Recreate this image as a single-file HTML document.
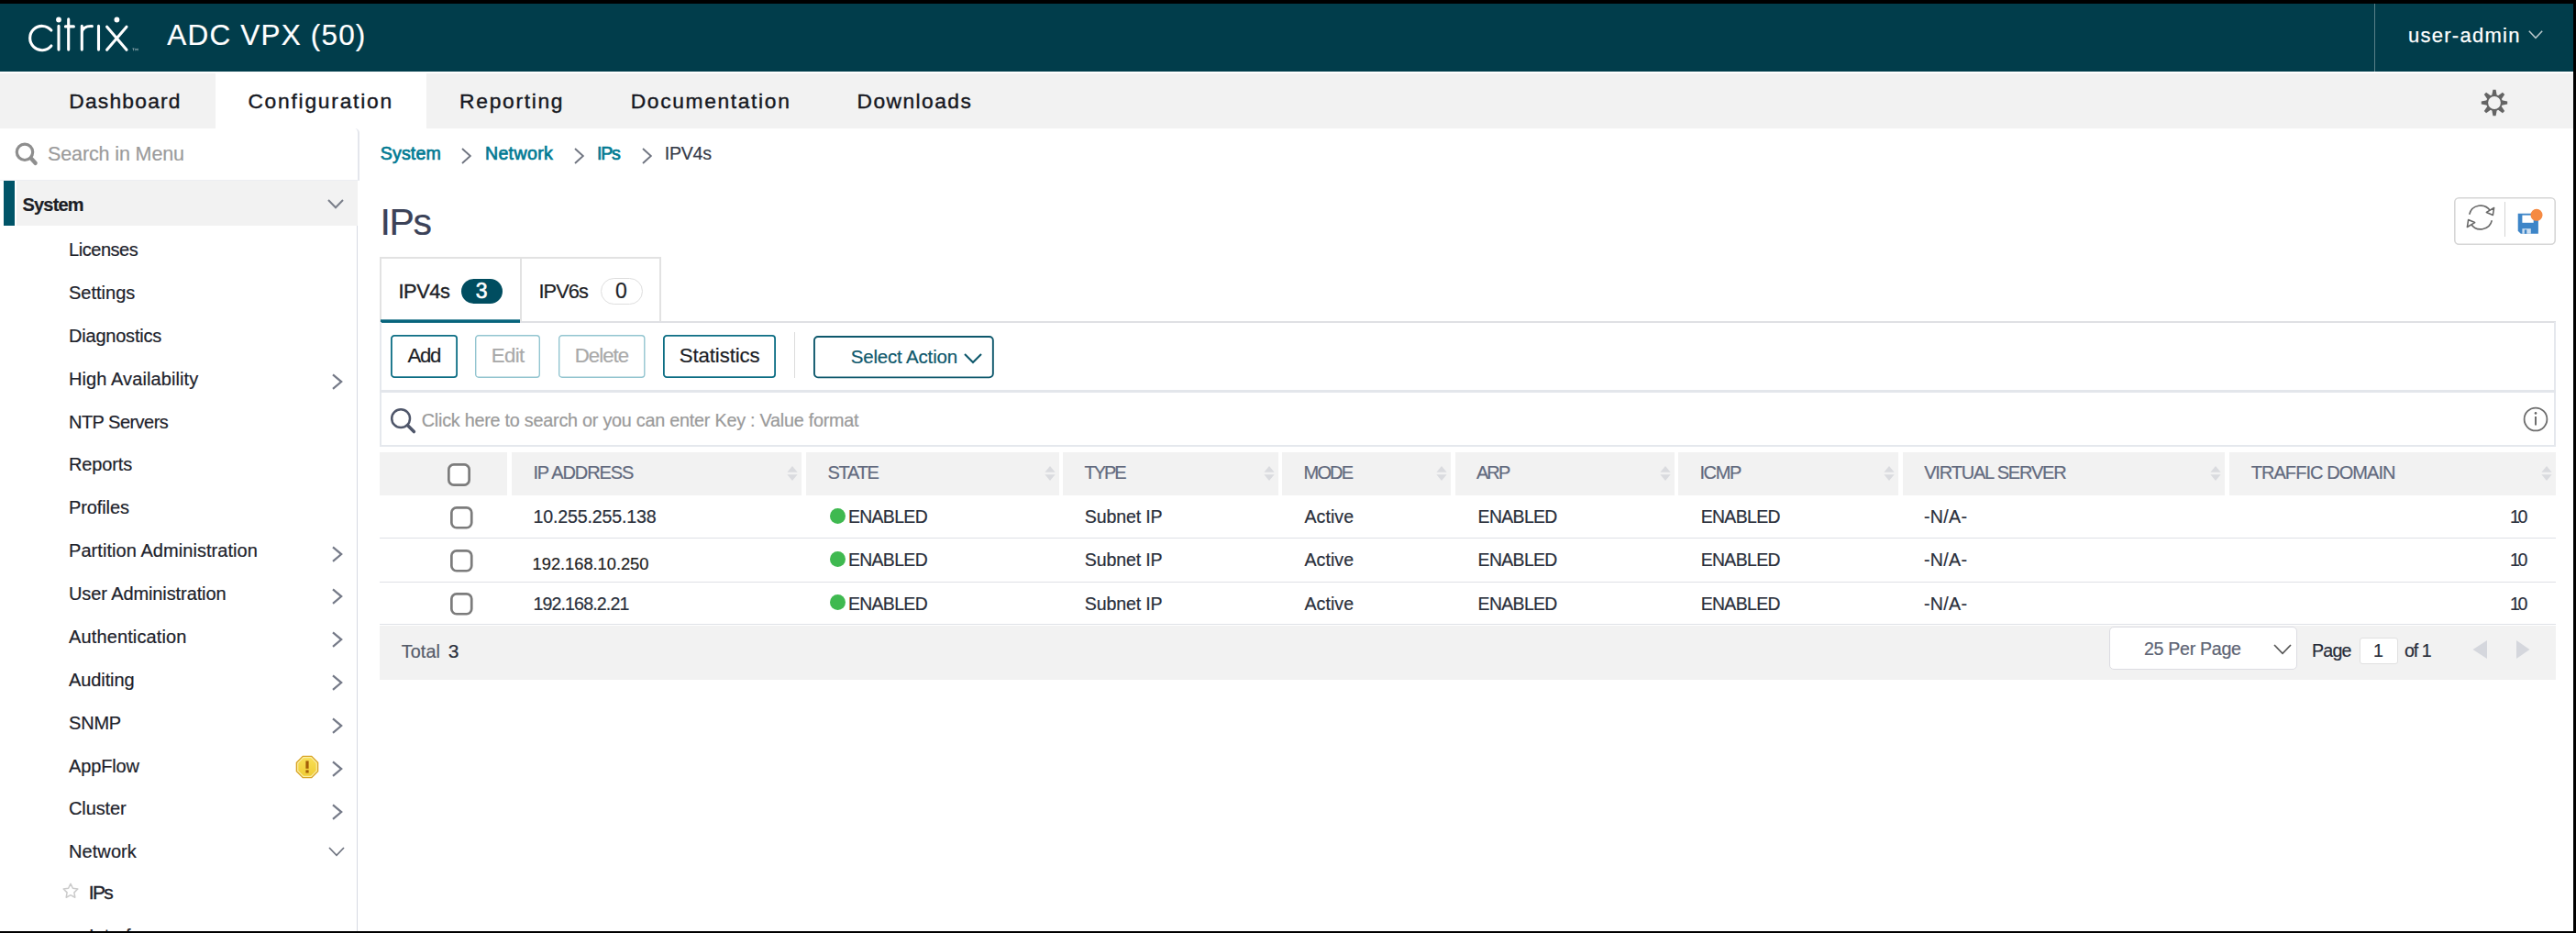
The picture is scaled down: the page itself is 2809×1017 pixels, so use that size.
<!DOCTYPE html>
<html lang="en"><head><meta charset="utf-8"><title>Citrix ADC VPX - IPs</title>
<style>
html,body{margin:0;padding:0}
body{width:2809px;height:1017px;overflow:hidden;background:#000;position:relative;font-family:"Liberation Sans",sans-serif;}
#page{position:absolute;left:0;top:0;width:2806px;height:1015px;overflow:hidden;background:#fff}
.t{position:absolute;white-space:nowrap;line-height:1;-webkit-text-stroke:0.2px;}
.b{position:absolute;box-sizing:border-box;}
svg{position:absolute;overflow:visible}
</style></head><body><div id="page">

<header>
<div class="b" style="left:0px;top:0px;width:2806px;height:4px;background:#000;"></div>
<div class="b" style="left:0px;top:4px;width:2806px;height:74px;background:#013d4b;"></div>
<svg style="left:31px;top:19px" width="122" height="40" viewBox="0 0 122 40" fill="none" stroke="#fff" stroke-width="3.1" stroke-linecap="round">
<path d="M24.9 14.1 A13.15 13.15 0 1 0 24.9 31"/>
<path d="M33 9.4 V35.1"/>
<path d="M43.7 1.9 V35.1 M40.4 9.9 H49.4" />
<path d="M58.3 9.4 V35.1 M58.3 17.5 C58.3 12 62.5 9.2 69.4 9.6"/>
<path d="M76.5 9.4 V35.1"/>
<path d="M85.6 10.2 L107 35.3 M107 10.2 L85.6 35.3"/>
<circle cx="33" cy="2.5" r="2.9" fill="#fff" stroke="none"/>
<circle cx="96.4" cy="2.5" r="2.9" fill="#fff" stroke="none"/>
<path d="M113.4 33.9 H115.6 M114.5 33.9 V36.3 M116.8 36.3 V33.9 L118 35.5 L119.2 33.9 V36.3" stroke="#9fb4ba" stroke-width="0.7" stroke-linecap="butt"/>
</svg>
<span class="t" style="left:182.3px;top:23px;font-size:31.5px;color:#fff;letter-spacing:1.18px;">ADC VPX (50)</span>
<div class="b" style="left:2589px;top:4px;width:1px;height:74px;background:rgba(255,255,255,0.35);"></div>
<span class="t" style="left:2626.0px;top:28px;font-size:22px;color:#fff;letter-spacing:1.26px;-webkit-text-stroke:0.25px #fff;">user-admin</span>
<svg style="left:2757px;top:33px" width="16" height="10" viewBox="0 0 16 10" fill="none" stroke="#b9c7cb" stroke-width="1.5"><path d="M0.8 0.8 L8 8.3 L15.2 0.8"/></svg>
</header>
<nav>
<div class="b" style="left:0px;top:78px;width:2806px;height:2px;background:#fff;"></div>
<div class="b" style="left:0px;top:80px;width:2806px;height:60px;background:#f2f2f2;"></div>
<div class="b" style="left:234.5px;top:80px;width:230.3px;height:60px;background:#fff;"></div>
<span class="t" style="left:75.2px;top:99px;font-size:22.8px;color:#16181f;letter-spacing:1.23px;-webkit-text-stroke:0.4px #16181f;">Dashboard</span>
<span class="t" style="left:270.4px;top:99px;font-size:22.8px;color:#16181f;letter-spacing:1.76px;-webkit-text-stroke:0.4px #16181f;">Configuration</span>
<span class="t" style="left:501.1px;top:99px;font-size:22.8px;color:#16181f;letter-spacing:1.70px;-webkit-text-stroke:0.4px #16181f;">Reporting</span>
<span class="t" style="left:687.7px;top:99px;font-size:22.8px;color:#16181f;letter-spacing:1.65px;-webkit-text-stroke:0.4px #16181f;">Documentation</span>
<span class="t" style="left:934.5px;top:99px;font-size:22.8px;color:#16181f;letter-spacing:1.45px;-webkit-text-stroke:0.4px #16181f;">Downloads</span>
<svg style="left:2704.7px;top:97.2px" width="30" height="30" viewBox="-15 -15 30 30"><g fill="#646464">
<circle r="8.9"/>
<g id="tooth"><path d="M-2.7 -8 L-1.6 -14.2 H1.6 L2.7 -8 Z"/></g>
<use href="#tooth" transform="rotate(45)"/><use href="#tooth" transform="rotate(90)"/><use href="#tooth" transform="rotate(135)"/><use href="#tooth" transform="rotate(180)"/><use href="#tooth" transform="rotate(225)"/><use href="#tooth" transform="rotate(270)"/><use href="#tooth" transform="rotate(315)"/>
</g><circle r="6.9" fill="#f2f2f2"/></svg>
</nav>
<aside>
<div class="b" style="left:0px;top:140px;width:392px;height:57px;border-right:2px solid #e4e6ec;border-bottom:1px solid #eceef2;border-top-right-radius:5px;"></div>
<div class="b" style="left:389px;top:197px;width:1px;height:818px;background:#d6dae3;"></div>
<svg style="left:14.8px;top:154.2px" width="28" height="28" viewBox="0 0 28 28" fill="none" stroke="#8e8e8e" stroke-width="3.2"><circle cx="12" cy="11.8" r="8.7"/><path d="M18.8 18.6 L23.6 23.8" stroke-width="4.4" stroke-linecap="round"/></svg>
<span class="t" style="left:52.0px;top:158px;font-size:21.5px;color:#9b9b9b;letter-spacing:-0.12px;">Search in Menu</span>
<div class="b" style="left:18px;top:197px;width:372px;height:49px;background:#f2f2f2;"></div>
<div class="b" style="left:4px;top:197px;width:12px;height:49px;background:#005468;"></div>
<span class="t" style="left:24.6px;top:213px;font-size:20px;color:#1c1e26;letter-spacing:-0.85px;font-weight:bold;">System</span>
<svg style="left:357px;top:216.6px" width="18" height="11" viewBox="0 0 18 11" fill="none" stroke="#7a7f8a" stroke-width="2"><path d="M1 1 L9 9.3 L17 1"/></svg>
<span class="t" style="left:75.0px;top:262px;font-size:20px;color:#20222b;letter-spacing:-0.45px;">Licenses</span>
<span class="t" style="left:75.0px;top:309px;font-size:20px;color:#20222b;">Settings</span>
<span class="t" style="left:75.0px;top:356px;font-size:20px;color:#20222b;letter-spacing:-0.21px;">Diagnostics</span>
<span class="t" style="left:75.0px;top:403px;font-size:20px;color:#20222b;letter-spacing:0.09px;">High Availability</span>
<svg style="left:362.3px;top:407.1px" width="12" height="18" viewBox="0 0 12 18" fill="none" stroke="#757a88" stroke-width="2.2"><path d="M1 1.3 L10.2 9.05 L1 16.8"/></svg>
<span class="t" style="left:75.0px;top:450px;font-size:20px;color:#20222b;letter-spacing:-0.53px;">NTP Servers</span>
<span class="t" style="left:75.0px;top:496px;font-size:20px;color:#20222b;letter-spacing:-0.12px;">Reports</span>
<span class="t" style="left:75.0px;top:543px;font-size:20px;color:#20222b;letter-spacing:-0.10px;">Profiles</span>
<span class="t" style="left:75.0px;top:590px;font-size:20px;color:#20222b;letter-spacing:0.06px;">Partition Administration</span>
<svg style="left:362.3px;top:594.6px" width="12" height="18" viewBox="0 0 12 18" fill="none" stroke="#757a88" stroke-width="2.2"><path d="M1 1.3 L10.2 9.05 L1 16.8"/></svg>
<span class="t" style="left:75.0px;top:637px;font-size:20px;color:#20222b;letter-spacing:-0.10px;">User Administration</span>
<svg style="left:362.3px;top:641.4px" width="12" height="18" viewBox="0 0 12 18" fill="none" stroke="#757a88" stroke-width="2.2"><path d="M1 1.3 L10.2 9.05 L1 16.8"/></svg>
<span class="t" style="left:75.0px;top:684px;font-size:20px;color:#20222b;letter-spacing:0.13px;">Authentication</span>
<svg style="left:362.3px;top:688.3px" width="12" height="18" viewBox="0 0 12 18" fill="none" stroke="#757a88" stroke-width="2.2"><path d="M1 1.3 L10.2 9.05 L1 16.8"/></svg>
<span class="t" style="left:75.0px;top:731px;font-size:20px;color:#20222b;letter-spacing:-0.10px;">Auditing</span>
<svg style="left:362.3px;top:735.2px" width="12" height="18" viewBox="0 0 12 18" fill="none" stroke="#757a88" stroke-width="2.2"><path d="M1 1.3 L10.2 9.05 L1 16.8"/></svg>
<span class="t" style="left:75.0px;top:778px;font-size:20px;color:#20222b;letter-spacing:-0.19px;">SNMP</span>
<svg style="left:362.3px;top:782.1px" width="12" height="18" viewBox="0 0 12 18" fill="none" stroke="#757a88" stroke-width="2.2"><path d="M1 1.3 L10.2 9.05 L1 16.8"/></svg>
<span class="t" style="left:75.0px;top:825px;font-size:20px;color:#20222b;letter-spacing:-0.13px;">AppFlow</span>
<svg style="left:362.3px;top:828.9px" width="12" height="18" viewBox="0 0 12 18" fill="none" stroke="#757a88" stroke-width="2.2"><path d="M1 1.3 L10.2 9.05 L1 16.8"/></svg>
<span class="t" style="left:75.0px;top:871px;font-size:20px;color:#20222b;letter-spacing:-0.11px;">Cluster</span>
<svg style="left:362.3px;top:875.8px" width="12" height="18" viewBox="0 0 12 18" fill="none" stroke="#757a88" stroke-width="2.2"><path d="M1 1.3 L10.2 9.05 L1 16.8"/></svg>
<span class="t" style="left:75.0px;top:918px;font-size:20px;color:#20222b;letter-spacing:0.08px;">Network</span>
<svg style="left:358px;top:922.9px" width="18" height="11" viewBox="0 0 18 11" fill="none" stroke="#6f7480" stroke-width="1.7"><path d="M1 1 L9 9.3 L17 1"/></svg>
<svg style="left:321.6px;top:823px" width="26" height="26" viewBox="-13 -13 26 26"><defs><linearGradient id="wg" x1="0" y1="0" x2="0" y2="1"><stop offset="0" stop-color="#f8de55"/><stop offset="1" stop-color="#f0cd36"/></linearGradient></defs><path d="M-5.09 -12.30 H5.09 L12.30 -5.09 V5.09 L5.09 12.30 H-5.09 L-12.30 5.09 V-5.09 Z" fill="#d9a526"/><path d="M-4.51 -10.90 H4.51 L10.90 -4.51 V4.51 L4.51 10.90 H-4.51 L-10.90 4.51 V-4.51 Z" fill="#fbeea4"/><path d="M-4.02 -9.70 H4.02 L9.70 -4.02 V4.02 L4.02 9.70 H-4.02 L-9.70 4.02 V-4.02 Z" fill="url(#wg)"/><rect x="-1.6" y="-6.6" width="3.2" height="8.4" fill="#a35e08"/><rect x="-1.6" y="3.4" width="3.2" height="3.1" fill="#a35e08"/></svg>
<svg style="left:68px;top:962px" width="18" height="18" viewBox="0 0 18 18" fill="none" stroke="#cbcbcb" stroke-width="1.5" stroke-linejoin="round"><path d="M9.00 1.40 L11.41 6.28 L16.80 7.07 L12.90 10.87 L13.82 16.23 L9.00 13.70 L4.18 16.23 L5.10 10.87 L1.20 7.07 L6.59 6.28 Z"/></svg>
<span class="t" style="left:96.8px;top:962px;font-size:21px;color:#20222b;letter-spacing:-1.67px;-webkit-text-stroke:0.35px #20222b;">IPs</span>
<span class="t" style="left:97.0px;top:1010px;font-size:20px;color:#20222b;">Interfaces</span>
</aside>
<main>
<span class="t" style="left:414.8px;top:158px;font-size:19.6px;color:#017a93;letter-spacing:0.13px;-webkit-text-stroke:0.7px #017a93;">System</span>
<span class="t" style="left:528.9px;top:158px;font-size:19.6px;color:#017a93;letter-spacing:0.34px;-webkit-text-stroke:0.7px #017a93;">Network</span>
<span class="t" style="left:651.1px;top:158px;font-size:19.6px;color:#017a93;letter-spacing:-1.26px;-webkit-text-stroke:0.7px #017a93;">IPs</span>
<span class="t" style="left:724.8px;top:158px;font-size:19.6px;color:#353a48;letter-spacing:-0.27px;-webkit-text-stroke:0.2px #353a48;">IPV4s</span>
<svg style="left:502.5px;top:160.8px" width="11" height="18" viewBox="0 0 11 18" fill="none" stroke="#6f7480" stroke-width="1.9"><path d="M1 1 L9.8 9 L1 17"/></svg>
<svg style="left:625.5px;top:160.8px" width="11" height="18" viewBox="0 0 11 18" fill="none" stroke="#6f7480" stroke-width="1.9"><path d="M1 1 L9.8 9 L1 17"/></svg>
<svg style="left:699.5px;top:160.8px" width="11" height="18" viewBox="0 0 11 18" fill="none" stroke="#6f7480" stroke-width="1.9"><path d="M1 1 L9.8 9 L1 17"/></svg>
<span class="t" style="left:414.6px;top:222px;font-size:41px;color:#3b4258;letter-spacing:-1.47px;">IPs</span>
<svg style="left:2676px;top:215px" width="111" height="52" viewBox="0 0 111 52"><rect x="0.8" y="0.8" width="109.4" height="50.4" rx="4.5" fill="#fff" stroke="#d6d6d6" stroke-width="1.6"/></svg>
<div class="b" style="left:2731px;top:220px;width:1.400000000000091px;height:38px;background:#d4d4d4;"></div>
<svg style="left:2690px;top:222px" width="30" height="30" viewBox="-15 -15 30 30" fill="none" stroke="#6a6a6a" stroke-width="1.6" stroke-linejoin="round">
<path d="M-12.3 -3.2 A12.6 12.6 0 0 1 10.6 -7"/><path d="M12.3 3.2 A12.6 12.6 0 0 1 -10.6 7"/>
<path d="M14.6 -10.5 L13.4 -2.6 L6.4 -5.6 Z" fill="#fff"/><path d="M-14.6 10.5 L-13.4 2.6 L-6.4 5.6 Z" fill="#fff"/></svg>
<svg style="left:2745px;top:227px" width="30" height="30" viewBox="0 0 30 30"><path d="M0.7 5.7 H22.9 V27.8 H3.8 L0.7 24.7 Z" fill="#3d85c8"/><rect x="5.4" y="7.6" width="12.3" height="8.2" fill="#fff"/><rect x="5.4" y="22.2" width="9.4" height="5.6" fill="#cfe0f1"/><rect x="7.8" y="23.4" width="2.5" height="4.4" fill="#3d85c8"/><circle cx="21" cy="7.3" r="6.5" fill="#f58a42"/></svg>
<div class="b" style="left:414px;top:280px;width:307px;height:71px;border:2px solid #e2e2e2;border-bottom:none;"></div>
<div class="b" style="left:567px;top:281px;width:2px;height:70px;background:#e2e2e2;"></div>
<div class="b" style="left:414px;top:350px;width:2373px;height:2.1999999999999886px;background:#dfe0e4;"></div>
<svg style="left:415px;top:347px" width="152" height="6" viewBox="0 0 152 6"><rect x="0" y="1.3" width="152" height="3.6" fill="#06647c"/></svg>
<div class="b" style="left:414px;top:351px;width:2px;height:135px;background:#e5e8ed;"></div>
<div class="b" style="left:2785px;top:351px;width:2px;height:135px;background:#e5e8ed;"></div>
<span class="t" style="left:434.4px;top:307px;font-size:21.8px;color:#1c1e26;letter-spacing:-0.39px;-webkit-text-stroke:0.35px #1c1e26;">IPV4s</span>
<div class="b" style="left:503px;top:304px;width:45px;height:27px;background:#004d60;border-radius:14px;"></div>
<span class="t" style="left:518.8px;top:306px;font-size:23px;color:#fff;-webkit-text-stroke:0.6px #fff;">3</span>
<span class="t" style="left:587.5px;top:307px;font-size:21.8px;color:#1c1e26;letter-spacing:-0.97px;">IPV6s</span>
<div class="b" style="left:654.5px;top:303px;width:46.0px;height:29px;background:#fff;border:1.5px solid #dedede;border-radius:15px;"></div>
<span class="t" style="left:671.0px;top:306px;font-size:23px;color:#1c1e26;">0</span>
<svg style="left:426px;top:365.2px" width="73" height="47.0" viewBox="0 0 73 47.0"><rect x="0.9" y="0.9" width="71.2" height="45.2" rx="3.2" fill="#fff" stroke="#0d6e84" stroke-width="1.8"/></svg>
<span class="t" style="left:444.4px;top:377px;font-size:22.2px;color:#1c1e26;letter-spacing:-1.25px;">Add</span>
<svg style="left:518px;top:365.2px" width="71" height="47.0" viewBox="0 0 71 47.0"><rect x="0.7" y="0.7" width="69.6" height="45.6" rx="3.2" fill="#fff" stroke="#93c5d0" stroke-width="1.4"/></svg>
<span class="t" style="left:535.7px;top:377px;font-size:22.2px;color:#a9a9a9;letter-spacing:-0.55px;">Edit</span>
<svg style="left:608.5px;top:365.2px" width="94.5" height="47.0" viewBox="0 0 94.5 47.0"><rect x="0.7" y="0.7" width="93.1" height="45.6" rx="3.2" fill="#fff" stroke="#93c5d0" stroke-width="1.4"/></svg>
<span class="t" style="left:626.7px;top:377px;font-size:22.2px;color:#a9a9a9;letter-spacing:-0.93px;">Delete</span>
<svg style="left:723px;top:365.2px" width="123" height="47.0" viewBox="0 0 123 47.0"><rect x="0.9" y="0.9" width="121.2" height="45.2" rx="3.2" fill="#fff" stroke="#0d6e84" stroke-width="1.8"/></svg>
<span class="t" style="left:740.8px;top:377px;font-size:22.2px;color:#1c1e26;letter-spacing:-0.11px;">Statistics</span>
<div class="b" style="left:865.5px;top:362px;width:1.5px;height:50px;background:#dcdcdc;"></div>
<svg style="left:886.8px;top:366px" width="196.79999999999995" height="46.30000000000001" viewBox="0 0 196.79999999999995 46.30000000000001"><rect x="0.95" y="0.95" width="194.89999999999995" height="44.40000000000001" rx="4" fill="#fff" stroke="#0e586c" stroke-width="1.9"/></svg>
<span class="t" style="left:927.7px;top:379px;font-size:20.5px;color:#0e586c;letter-spacing:-0.17px;">Select Action</span>
<svg style="left:1050.5px;top:384.6px" width="20" height="12" viewBox="0 0 20 12" fill="none" stroke="#0e586c" stroke-width="2.1"><path d="M1 1 L10 10 L19 1"/></svg>
<div class="b" style="left:414px;top:425.3px;width:2373px;height:2.5px;background:#e3e6eb;"></div>
<svg style="left:425px;top:444px" width="30" height="30" viewBox="0 0 30 30" fill="none" stroke="#4f566a" stroke-width="2.5"><circle cx="12.1" cy="12.2" r="9.9"/><path d="M19.6 19.8 L26.4 26.6" stroke-width="3.5" stroke-linecap="round"/></svg>
<span class="t" style="left:459.8px;top:449px;font-size:19.8px;color:#9a9a9a;letter-spacing:-0.24px;">Click here to search or you can enter Key : Value format</span>
<svg style="left:2750.9px;top:443px" width="28" height="28" viewBox="-14 -14 28 28" fill="none" stroke="#6e6e6e" stroke-width="1.8"><circle r="12.4"/><path d="M0 -3 V6.5" stroke-width="2"/><circle cx="0" cy="-6.6" r="1.3" fill="#666" stroke="none"/></svg>
<div class="b" style="left:414px;top:484.7px;width:2373px;height:2.0px;background:#e5e8ed;"></div>
<div class="b" style="left:414px;top:493px;width:139px;height:46.700000000000045px;background:#f2f2f2;"></div>
<div class="b" style="left:558px;top:493px;width:316px;height:46.700000000000045px;background:#f2f2f2;"></div>
<span class="t" style="left:581.4px;top:505px;font-size:20px;color:#626a7e;letter-spacing:-1.08px;">IP ADDRESS</span>
<svg style="left:858.0px;top:507px" width="12" height="19" viewBox="0 0 12 19" fill="#dadbdf"><path d="M6 1 L11.6 7.8 H0.4 Z"/><path d="M6 17 L11.6 10.2 H0.4 Z"/></svg>
<div class="b" style="left:879px;top:493px;width:275.5px;height:46.700000000000045px;background:#f2f2f2;"></div>
<span class="t" style="left:902.4px;top:505px;font-size:20px;color:#626a7e;letter-spacing:-1.23px;">STATE</span>
<svg style="left:1138.5px;top:507px" width="12" height="19" viewBox="0 0 12 19" fill="#dadbdf"><path d="M6 1 L11.6 7.8 H0.4 Z"/><path d="M6 17 L11.6 10.2 H0.4 Z"/></svg>
<div class="b" style="left:1159px;top:493px;width:234.5px;height:46.700000000000045px;background:#f2f2f2;"></div>
<span class="t" style="left:1182.4px;top:505px;font-size:20px;color:#626a7e;letter-spacing:-1.98px;">TYPE</span>
<svg style="left:1377.5px;top:507px" width="12" height="19" viewBox="0 0 12 19" fill="#dadbdf"><path d="M6 1 L11.6 7.8 H0.4 Z"/><path d="M6 17 L11.6 10.2 H0.4 Z"/></svg>
<div class="b" style="left:1398.2px;top:493px;width:183.79999999999995px;height:46.700000000000045px;background:#f2f2f2;"></div>
<span class="t" style="left:1421.6px;top:505px;font-size:20px;color:#626a7e;letter-spacing:-1.87px;">MODE</span>
<svg style="left:1566.0px;top:507px" width="12" height="19" viewBox="0 0 12 19" fill="#dadbdf"><path d="M6 1 L11.6 7.8 H0.4 Z"/><path d="M6 17 L11.6 10.2 H0.4 Z"/></svg>
<div class="b" style="left:1586.5px;top:493px;width:239.0px;height:46.700000000000045px;background:#f2f2f2;"></div>
<span class="t" style="left:1609.9px;top:505px;font-size:20px;color:#626a7e;letter-spacing:-1.86px;">ARP</span>
<svg style="left:1809.5px;top:507px" width="12" height="19" viewBox="0 0 12 19" fill="#dadbdf"><path d="M6 1 L11.6 7.8 H0.4 Z"/><path d="M6 17 L11.6 10.2 H0.4 Z"/></svg>
<div class="b" style="left:1830px;top:493px;width:240px;height:46.700000000000045px;background:#f2f2f2;"></div>
<span class="t" style="left:1853.4px;top:505px;font-size:20px;color:#626a7e;letter-spacing:-1.33px;">ICMP</span>
<svg style="left:2054.0px;top:507px" width="12" height="19" viewBox="0 0 12 19" fill="#dadbdf"><path d="M6 1 L11.6 7.8 H0.4 Z"/><path d="M6 17 L11.6 10.2 H0.4 Z"/></svg>
<div class="b" style="left:2074.8px;top:493px;width:351.39999999999964px;height:46.700000000000045px;background:#f2f2f2;"></div>
<span class="t" style="left:2098.2px;top:505px;font-size:20px;color:#626a7e;letter-spacing:-1.18px;">VIRTUAL SERVER</span>
<svg style="left:2410.2px;top:507px" width="12" height="19" viewBox="0 0 12 19" fill="#dadbdf"><path d="M6 1 L11.6 7.8 H0.4 Z"/><path d="M6 17 L11.6 10.2 H0.4 Z"/></svg>
<div class="b" style="left:2431.3px;top:493px;width:355.6999999999998px;height:46.700000000000045px;background:#f2f2f2;"></div>
<span class="t" style="left:2454.7px;top:505px;font-size:20px;color:#626a7e;letter-spacing:-0.94px;">TRAFFIC DOMAIN</span>
<svg style="left:2771.0px;top:507px" width="12" height="19" viewBox="0 0 12 19" fill="#dadbdf"><path d="M6 1 L11.6 7.8 H0.4 Z"/><path d="M6 17 L11.6 10.2 H0.4 Z"/></svg>
<svg style="left:488.3px;top:504.8px" width="24.999999999999943" height="24.999999999999943" viewBox="0 0 24.999999999999943 24.999999999999943"><rect x="1.35" y="1.35" width="22.299999999999944" height="22.299999999999944" rx="5.5" fill="#fff" stroke="#7c7c7c" stroke-width="2.7"/></svg>
<svg style="left:491px;top:552.4px" width="24.600000000000023" height="24.600000000000023" viewBox="0 0 24.600000000000023 24.600000000000023"><rect x="1.35" y="1.35" width="21.900000000000023" height="21.900000000000023" rx="5.5" fill="#fff" stroke="#7c7c7c" stroke-width="2.7"/></svg>
<span class="t" style="left:581.4px;top:554px;font-size:19.6px;color:#2a2f3b;letter-spacing:-0.15px;">10.255.255.138</span>
<div class="b" style="left:904.8px;top:553.6999999999999px;width:17.0px;height:17.0px;background:#3fb950;border-radius:50%;"></div>
<span class="t" style="left:924.9px;top:554px;font-size:19.4px;color:#2a2f3b;letter-spacing:-0.63px;">ENABLED</span>
<span class="t" style="left:1182.8px;top:554px;font-size:19.6px;color:#2a2f3b;letter-spacing:-0.15px;">Subnet IP</span>
<span class="t" style="left:1422.5px;top:554px;font-size:19.6px;color:#2a2f3b;letter-spacing:0.05px;">Active</span>
<span class="t" style="left:1611.6px;top:554px;font-size:19.4px;color:#2a2f3b;letter-spacing:-0.63px;">ENABLED</span>
<span class="t" style="left:1854.7px;top:554px;font-size:19.4px;color:#2a2f3b;letter-spacing:-0.63px;">ENABLED</span>
<span class="t" style="left:2097.9px;top:554px;font-size:19.6px;color:#2a2f3b;letter-spacing:0.34px;">-N/A-</span>
<span class="t" style="left:2737.0px;top:554px;font-size:19.6px;color:#2a2f3b;letter-spacing:-2.30px;">10</span>
<div class="b" style="left:414px;top:586px;width:2373px;height:1px;background:#dfe1e6;"></div>
<svg style="left:491px;top:598.9px" width="24.600000000000023" height="24.600000000000023" viewBox="0 0 24.600000000000023 24.600000000000023"><rect x="1.35" y="1.35" width="21.900000000000023" height="21.900000000000023" rx="5.5" fill="#fff" stroke="#7c7c7c" stroke-width="2.7"/></svg>
<span class="t" style="left:580.6px;top:606px;font-size:18.3px;color:#222;letter-spacing:-0.02px;">192.168.10.250</span>
<div class="b" style="left:904.8px;top:600.5px;width:17.0px;height:17.0px;background:#3fb950;border-radius:50%;"></div>
<span class="t" style="left:924.9px;top:601px;font-size:19.4px;color:#2a2f3b;letter-spacing:-0.63px;">ENABLED</span>
<span class="t" style="left:1182.8px;top:601px;font-size:19.6px;color:#2a2f3b;letter-spacing:-0.15px;">Subnet IP</span>
<span class="t" style="left:1422.5px;top:601px;font-size:19.6px;color:#2a2f3b;letter-spacing:0.05px;">Active</span>
<span class="t" style="left:1611.6px;top:601px;font-size:19.4px;color:#2a2f3b;letter-spacing:-0.63px;">ENABLED</span>
<span class="t" style="left:1854.7px;top:601px;font-size:19.4px;color:#2a2f3b;letter-spacing:-0.63px;">ENABLED</span>
<span class="t" style="left:2097.9px;top:601px;font-size:19.6px;color:#2a2f3b;letter-spacing:0.34px;">-N/A-</span>
<span class="t" style="left:2737.0px;top:601px;font-size:19.6px;color:#2a2f3b;letter-spacing:-2.30px;">10</span>
<div class="b" style="left:414px;top:634px;width:2373px;height:1px;background:#dfe1e6;"></div>
<svg style="left:491px;top:645.8000000000001px" width="24.600000000000023" height="24.600000000000023" viewBox="0 0 24.600000000000023 24.600000000000023"><rect x="1.35" y="1.35" width="21.900000000000023" height="21.900000000000023" rx="5.5" fill="#fff" stroke="#7c7c7c" stroke-width="2.7"/></svg>
<span class="t" style="left:581.4px;top:649px;font-size:19.6px;color:#2a2f3b;letter-spacing:-0.86px;">192.168.2.21</span>
<div class="b" style="left:904.8px;top:648.1999999999999px;width:17.0px;height:17.0px;background:#3fb950;border-radius:50%;"></div>
<span class="t" style="left:924.9px;top:649px;font-size:19.4px;color:#2a2f3b;letter-spacing:-0.63px;">ENABLED</span>
<span class="t" style="left:1182.8px;top:649px;font-size:19.6px;color:#2a2f3b;letter-spacing:-0.15px;">Subnet IP</span>
<span class="t" style="left:1422.5px;top:649px;font-size:19.6px;color:#2a2f3b;letter-spacing:0.05px;">Active</span>
<span class="t" style="left:1611.6px;top:649px;font-size:19.4px;color:#2a2f3b;letter-spacing:-0.63px;">ENABLED</span>
<span class="t" style="left:1854.7px;top:649px;font-size:19.4px;color:#2a2f3b;letter-spacing:-0.63px;">ENABLED</span>
<span class="t" style="left:2097.9px;top:649px;font-size:19.6px;color:#2a2f3b;letter-spacing:0.34px;">-N/A-</span>
<span class="t" style="left:2737.0px;top:649px;font-size:19.6px;color:#2a2f3b;letter-spacing:-2.30px;">10</span>
<div class="b" style="left:414px;top:680px;width:2373px;height:1px;background:#dfe1e6;"></div>
<div class="b" style="left:414px;top:681.5px;width:2373px;height:59.5px;background:#f2f2f2;"></div>
<span class="t" style="left:437.8px;top:701px;font-size:19.8px;color:#555b69;letter-spacing:0.07px;">Total</span>
<span class="t" style="left:488.8px;top:699px;font-size:21px;color:#2a2f3b;">3</span>
<div class="b" style="left:2299.7px;top:683px;width:204.9000000000001px;height:47px;background:#fff;border:1.5px solid #dcdce2;border-radius:5px;"></div>
<span class="t" style="left:2337.9px;top:698px;font-size:19.6px;color:#5d6474;letter-spacing:-0.29px;">25 Per Page</span>
<svg style="left:2479px;top:702px" width="20" height="12" viewBox="0 0 20 12" fill="none" stroke="#555" stroke-width="1.7"><path d="M1 1 L10 10.3 L19 1"/></svg>
<span class="t" style="left:2521.0px;top:700px;font-size:19.6px;color:#262b38;letter-spacing:-0.79px;">Page</span>
<div class="b" style="left:2572.5px;top:695px;width:42.0px;height:28.5px;background:#fff;border:1.5px solid #e0e0e0;border-radius:3px;"></div>
<span class="t" style="left:2588.0px;top:700px;font-size:19.6px;color:#262b38;">1</span>
<span class="t" style="left:2622.0px;top:700px;font-size:19.6px;color:#262b38;letter-spacing:-1.03px;">of 1</span>
<svg style="left:2696px;top:697.3px" width="17" height="22" viewBox="0 0 17 22" fill="#d5d7dd"><path d="M16 1 V21 L0.5 11 Z"/></svg>
<svg style="left:2743.4px;top:697.3px" width="17" height="22" viewBox="0 0 17 22" fill="#d5d7dd"><path d="M1 1 V21 L15.5 11 Z"/></svg>
</main>
</div></body></html>
